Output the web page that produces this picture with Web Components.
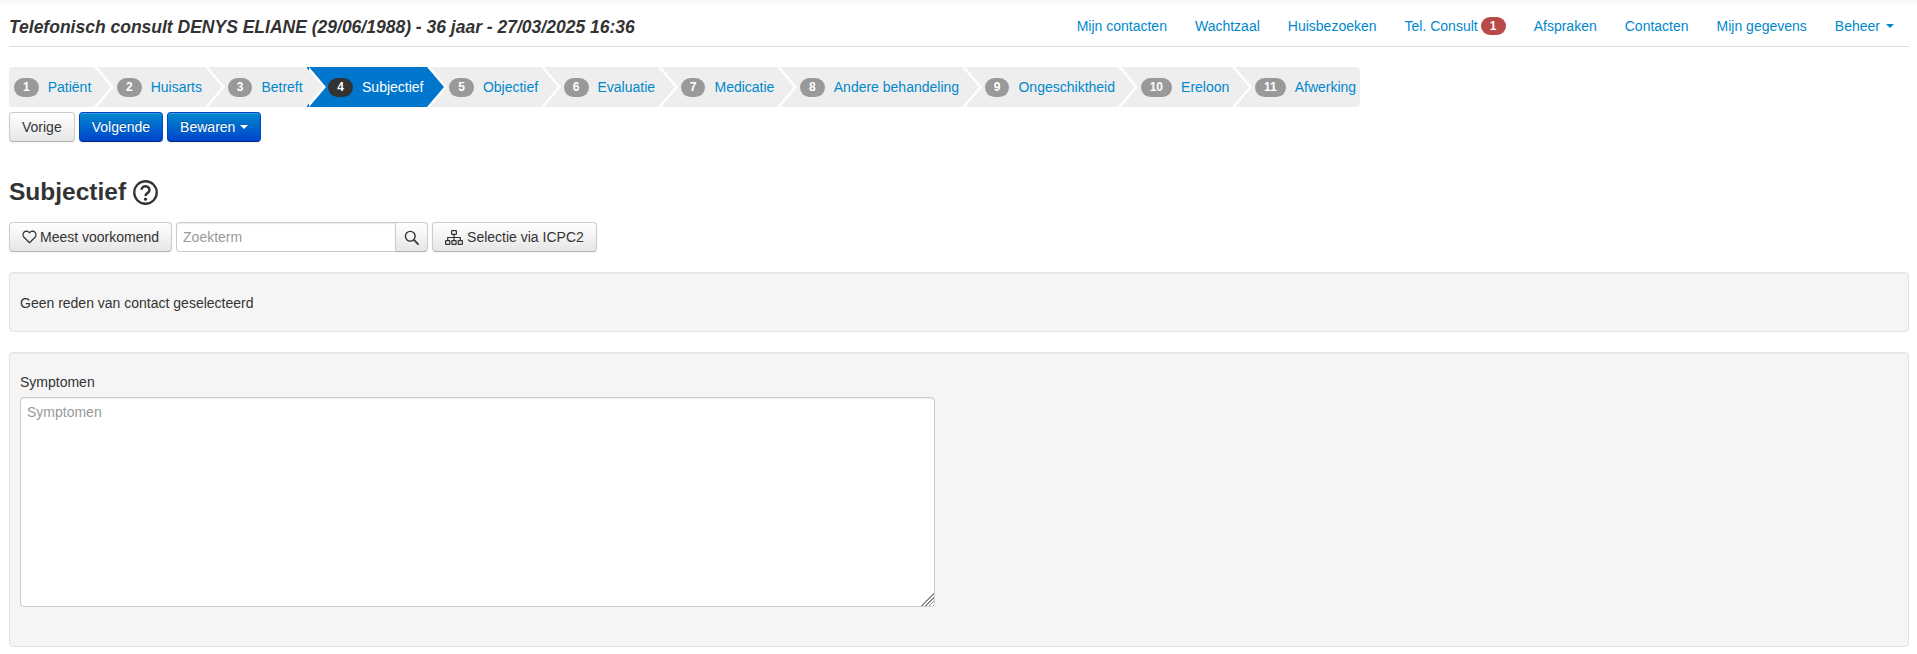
<!DOCTYPE html>
<html lang="nl">
<head>
<meta charset="utf-8">
<title>Subjectief</title>
<style>
  html, body { margin: 0; background: #fff; }
  body { font: 14px/20px "Liberation Sans", Arial, sans-serif; color: #333; }
</style>
</head>
<body>
<consult-page>
  <consult-header slot="header" title-text="Telefonisch consult DENYS ELIANE (29/06/1988) - 36 jaar - 27/03/2025 16:36">
    <nav-link>Mijn contacten</nav-link>
    <nav-link>Wachtzaal</nav-link>
    <nav-link>Huisbezoeken</nav-link>
    <nav-link badge="1">Tel. Consult</nav-link>
    <nav-link>Afspraken</nav-link>
    <nav-link>Contacten</nav-link>
    <nav-link>Mijn gegevens</nav-link>
    <nav-link caret>Beheer</nav-link>
  </consult-header>

  <step-bar>
    <step-item nr="1" first>Patiënt</step-item>
    <step-item nr="2">Huisarts</step-item>
    <step-item nr="3">Betreft</step-item>
    <step-item nr="4" active>Subjectief</step-item>
    <step-item nr="5">Objectief</step-item>
    <step-item nr="6">Evaluatie</step-item>
    <step-item nr="7">Medicatie</step-item>
    <step-item nr="8">Andere behandeling</step-item>
    <step-item nr="9">Ongeschiktheid</step-item>
    <step-item nr="10">Ereloon</step-item>
    <step-item nr="11" last>Afwerking</step-item>
  </step-bar>

  <button-row>
    <ui-button>Vorige</ui-button>
    <ui-button primary>Volgende</ui-button>
    <ui-button primary caret>Bewaren</ui-button>
  </button-row>

  <page-heading>Subjectief</page-heading>

  <search-toolbar></search-toolbar>

  <well-box class="first"><span>Geen reden van contact geselecteerd</span></well-box>

  <well-box class="second">
    <labelled-textarea label="Symptomen"></labelled-textarea>
  </well-box>
</consult-page>

<script>
function define(name, css, html, init) {
  customElements.define(name, class extends HTMLElement {
    constructor() {
      super();
      this.attachShadow({ mode: 'open' });
    }
    connectedCallback() {
      if (this.shadowRoot.childNodes.length) return;
      const t = document.createElement('template');
      t.innerHTML = '<style>' + css + '</style>' + (typeof html === 'function' ? html(this) : html);
      this.shadowRoot.appendChild(t.content.cloneNode(true));
      if (init) init(this);
    }
  });
}

define('consult-page', `
  :host { display: block; padding: 0 8px 0 9px; min-height: 654px; box-sizing: border-box;
    background: linear-gradient(#f6f6f6, #fff 5px) no-repeat; background-size: 100% 5px; }
`, '<slot name="header"></slot><slot></slot>');

define('consult-header', `
  :host { display: flex; justify-content: space-between; align-items: center; height: 38px; padding-top: 8px;
    border-bottom: 1px solid #ddd; }
  h1 { margin: 0; font: italic bold 17.5px/20px "Liberation Sans", Arial, sans-serif; color: #333; }
  nav { display: flex; align-items: center; margin-top: -2px; }
`, el => `<h1>${el.getAttribute('title-text')}</h1><nav><slot></slot></nav>`);

define('nav-link', `
  :host { display: flex; align-items: center; padding: 0 14px; color: #0088cc; white-space: nowrap; }
  :host(:last-child) { padding-right: 15px; }
  .badge { display: inline-block; min-width: 25px; box-sizing: border-box; height: 18px; line-height: 18px; margin-left: 3px;
    text-align: center; background: #b94a48; color: #fff; font-size: 12px; font-weight: bold; border-radius: 9px; }
  .caret { width: 0; height: 0; margin-left: 6px; border: 4px solid transparent; border-top-color: #0088cc; border-bottom: 0; }
`, el => `<slot></slot>` +
  (el.hasAttribute('badge') ? `<span class="badge">${el.getAttribute('badge')}</span>` : '') +
  (el.hasAttribute('caret') ? '<span class="caret"></span>' : ''));

define('step-bar', `
  :host { display: flex; width: max-content; margin-top: 20px; height: 40px; }
`, '<slot></slot>');

define('step-item', `
  :host { display: flex; align-items: center; position: relative; height: 40px; padding: 0 3px 0 19.7px; margin-right: 3px;
    color: #0088cc; white-space: nowrap; background: #eee; box-sizing: border-box; }
  :host([first]) { padding-left: 5px; border-radius: 4px 0 0 4px; }
  :host([last]) { padding-right: 3.5px; margin-right: 0; border-radius: 0 4px 4px 0; }
  :host([active]) { background: #0077cc; color: #fff; margin-left: -2px; padding-left: 21.7px; }
  .nr { display: inline-block; height: 19px; line-height: 19px; padding: 0 9px; box-sizing: border-box;
    margin-right: 9px; text-align: center; font-size: 12px; font-weight: bold; color: #fff; background: #999; border-radius: 10px; }
  :host([active]) .nr { background: #333; }
  /* white chevron behind, coloured chevron on top */
  .sep, .tip { position: absolute; top: 0; width: 0; height: 0; border-style: solid; border-color: transparent;
    border-width: 20px 0 20px 17px; }
  .sep { right: -20px; border-left-color: #fff; z-index: 1; }
  .tip { right: -17px; border-left-color: #eee; z-index: 2; }
  :host([active]) .tip { border-left-color: #0077cc; }
  :host([last]) .sep, :host([last]) .tip { display: none; }
`, el => `<span class="nr">${el.getAttribute('nr')}</span><slot></slot><i class="sep"></i><i class="tip"></i>`);

define('button-row', `
  :host { display: flex; gap: 4px; margin-top: 5px; }
`, '<slot></slot>');

define('ui-button', `
  :host { display: inline-flex; align-items: center; height: 30px; box-sizing: border-box; padding: 0 12px;
    color: #333; border: 1px solid #ccc; border-bottom-color: #b3b3b3; border-radius: 4px; white-space: nowrap;
    background: linear-gradient(#fff, #e6e6e6); box-shadow: inset 0 1px 0 rgba(255,255,255,.2), 0 1px 2px rgba(0,0,0,.05); }
  :host([primary]) { color: #fff; background: linear-gradient(#0088cc, #0044cc); border-color: #04c #04c #002a80;
    text-shadow: 0 -1px 0 rgba(0,0,0,.25); }
  .caret { width: 0; height: 0; margin-left: 4.5px; border: 4px solid transparent; border-top-color: #fff; border-bottom: 0; }
`, el => '<slot></slot>' + (el.hasAttribute('caret') ? '<span class="caret"></span>' : ''));

define('page-heading', `
  :host { display: flex; align-items: center; gap: 7px; margin-top: 34px; height: 32px;
    font-size: 24.5px; line-height: 32px; font-weight: bold; color: #333; }
  svg { width: 25px; height: 25px; }
`, `<slot></slot>
  <svg viewBox="0 0 24 24" fill="none" stroke="#333" stroke-width="2.2">
    <circle cx="12" cy="12" r="10.8"/>
    <path d="M8.2 9.4a3.8 3.5 0 1 1 5.9 3c-1.4.9-2.1 1.4-2.1 3" stroke-width="2.4"/>
    <circle cx="12" cy="18.4" r="1.5" fill="#333" stroke="none"/>
  </svg>`);

define('search-toolbar', `
  :host { display: flex; gap: 4px; margin-top: 14px; }
  ui-button svg { display: block; width: 15px; height: 14px; margin-right: 3px; }
  .group { display: flex; height: 30px; }
  input { width: 219px; height: 30px; box-sizing: border-box; margin: 0; padding: 0 6px; font: inherit; color: #555;
    border: 1px solid #ccc; border-right: 0; border-radius: 4px 0 0 4px; background: #fff; outline: 0;
    box-shadow: inset 0 1px 1px rgba(0,0,0,.075); }
  input::placeholder { color: #999; opacity: 1; }
  .search { padding: 0 8px; border-radius: 0 4px 4px 0; }
  .search svg { margin: 0; width: 15px; height: 15px; }
`, `
  <ui-button>
    <svg viewBox="0 0 16 15" fill="none" stroke="#333" stroke-width="1.3"><path d="M8 13.6 2.3 8A3.6 3.6 0 0 1 1 5.2 3.9 3.9 0 0 1 4.8 1.2C6.1 1.2 7.3 2 8 3c.7-1 1.9-1.8 3.2-1.8A3.9 3.9 0 0 1 15 5.2 3.6 3.6 0 0 1 13.7 8z" stroke-linejoin="round"/></svg>
    Meest voorkomend
  </ui-button>
  <div class="group">
    <input type="text" placeholder="Zoekterm">
    <ui-button class="search">
      <svg viewBox="0 0 16 16" fill="none" stroke="#333" stroke-width="1.5"><circle cx="6.7" cy="6.7" r="5.2"/><path d="m10.6 10.6 4.4 4.4" stroke-width="1.8" stroke-linecap="round"/></svg>
    </ui-button>
  </div>
  <ui-button>
    <svg viewBox="0 0 18 15" fill="none" stroke="#333" stroke-width="1.2" style="width:18px;height:15px;margin-right:4px">
      <rect x="6.6" y=".6" width="4.8" height="3.8" rx=".5"/>
      <rect x=".6" y="10.6" width="4.2" height="3.8" rx=".5"/>
      <rect x="6.9" y="10.6" width="4.2" height="3.8" rx=".5"/>
      <rect x="13.2" y="10.6" width="4.2" height="3.8" rx=".5"/>
      <path d="M9 4.4v6.2M2.7 10.6V7.5h12.6v3.1"/>
    </svg>
    Selectie via ICPC2
  </ui-button>`);

define('well-box', `
  :host { display: block; box-sizing: border-box; border: 1px solid #e3e3e3; border-radius: 4px; background: #f5f5f5;
    box-shadow: inset 0 1px 1px rgba(0,0,0,.05); padding: 20px 10px; margin-top: 20px; }
  :host(.first) { height: 60px; }
  :host(.second) { height: 295px; padding: 19px 10px; }
`, '<slot></slot>');

define('labelled-textarea', `
  :host { display: block; }
  label { display: block; margin-bottom: 5px; }
  textarea { display: block; width: 915px; height: 210px; box-sizing: border-box; margin: 0; padding: 4px 6px; font: inherit; color: #555;
    border: 1px solid #ccc; border-radius: 4px; background: #fff; outline: 0; box-shadow: inset 0 1px 1px rgba(0,0,0,.075); }
  textarea::placeholder { color: #999; opacity: 1; }
  textarea::-webkit-resizer { background:
    linear-gradient(135deg, #fff 50%, transparent 50%),
    repeating-linear-gradient(135deg, #fff 0 1.6px, #888 1.6px 2.6px); }
`, el => { const l = el.getAttribute('label'); return `<label>${l}</label><textarea placeholder="${l}"></textarea>`; });
</script>
</body>
</html>
